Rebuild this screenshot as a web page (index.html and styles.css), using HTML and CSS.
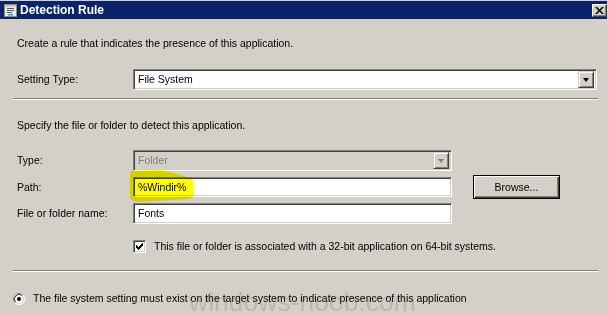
FILE: index.html
```html
<!DOCTYPE html>
<html>
<head>
<meta charset="utf-8">
<link rel="stylesheet" href="styles.css">
</head>
<body>
<div class="window">
  <div class="titlebar">
    <svg class="app-icon" width="13" height="13" viewBox="0 0 13 13">
      <rect x="0.5" y="0.5" width="12" height="12" fill="#ecebe8" stroke="#8a8a8a"/>
      <rect x="1" y="1" width="11" height="2" fill="#c8c8c8"/>
      <path d="M3 4.5h7M3 6.5h7M3 8.5h5" stroke="#5a5a5a" stroke-width="1"/>
      <rect x="4" y="10" width="5" height="1.5" fill="#1aa0e8"/>
    </svg>
    <span class="title">Detection Rule</span>
    <div class="close-btn">
      <svg width="9" height="7" viewBox="0 0 9 7">
        <path d="M0 0h2l2.5 2.5L7 0h2L5.5 3.5 9 7H7L4.5 4.5 2 7H0l3.5-3.5z" fill="#000"/>
      </svg>
    </div>
  </div>

  <div class="content">
    <p class="text intro">Create a rule that indicates the presence of this application.</p>

    <div class="setting-row">
      <span class="text label">Setting Type:</span>
      <div class="combo combo-wide">
        <span class="combo-value">File System</span>
        <span class="drop-btn"><span class="arrow"></span></span>
      </div>
    </div>

    <div class="sep"></div>

    <p class="text intro second">Specify the file or folder to detect this application.</p>

    <div class="form-grid">
      <span class="text label">Type:</span>
      <div class="combo combo-disabled">
        <span class="combo-value">Folder</span>
        <span class="drop-btn"><span class="arrow arrow-disabled"></span></span>
      </div>
      <span></span>

      <span class="text label">Path:</span>
      <div class="field field-path"><span class="field-value">%Windir%</span></div>
      <div class="button default-btn"><span>Browse...</span></div>

      <span class="text label">File or folder name:</span>
      <div class="field"><span class="field-value">Fonts</span></div>
      <span></span>
    </div>

    <div class="check-row">
      <span class="checkbox">
        <svg width="7" height="7" viewBox="0 0 7 7"><path d="M0 2h1v1h1v1h1v-1h1v-1h1v-1h1v-1h1v3h-1v1h-1v1h-1v1h-1v1h-1v-1h-1v-1h-1z" fill="#000"/></svg>
      </span>
      <span class="text">This file or folder is associated with a 32-bit application on 64-bit systems.</span>
    </div>

    <div class="sep sep-second"></div>

    <div class="radio-row">
      <svg class="radio" width="12" height="12" viewBox="0 0 12 12">
        <circle cx="6" cy="6" r="5.5" fill="#fff" stroke="#ffffff"/>
        <path d="M2.11 9.89A5.5 5.5 0 0 1 9.89 2.11" fill="none" stroke="#808080"/>
        <circle cx="6" cy="6" r="4.5" fill="#fff" stroke="#d4d0c8"/>
        <path d="M2.82 9.18A4.5 4.5 0 0 1 9.18 2.82" fill="none" stroke="#404040"/>
        <circle cx="6" cy="6" r="2" fill="#000"/>
      </svg>
      <span class="text">The file system setting must exist on the target system to indicate presence of this application</span>
    </div>
  </div>

  <svg class="highlight" width="68" height="35" viewBox="0 0 68 35">
    <path d="M4 2L30 1C40 2 50 5 58 8C63 9 65 10 65 14L65 26C65 29 62 30 58 30L12 33C5 33 2 31 2 26L2 7C2 4 3 2 4 2Z" fill="#ffff00"/>
  </svg>

  <div class="watermark">windows-noob.com</div>
</div>
</body>
</html>
```

FILE: styles.css
```css
* { box-sizing: border-box; }

html, body {
  margin: 0;
  padding: 0;
  background: #d4d0c8;
}

.window {
  position: relative;
  width: 607px;
  height: 314px;
  overflow: hidden;
  background: #d4d0c8;
  font-family: "Liberation Sans", Arial, sans-serif;
  font-size: 10.5px;
  color: #000;
}

.titlebar {
  margin-top: 1px;
  height: 18px;
  background: #0a246a;
  display: flex;
  align-items: center;
  padding-left: 4px;
}

.app-icon { flex: none; }

.title {
  margin-left: 3px;
  color: #fff;
  font-weight: bold;
  font-size: 12px;
  line-height: 18px;
}

.close-btn {
  margin-left: auto;
  width: 15px;
  height: 13px;
  background: #d4d0c8;
  border: 1px solid;
  border-color: #fff #404040 #404040 #fff;
  box-shadow: inset -1px -1px #808080;
  display: flex;
  align-items: center;
  justify-content: center;
}

.content {
  padding: 18px 10px 0 13px;
}

.text {
  line-height: 13px;
  white-space: nowrap;
}

.intro {
  margin: 0;
  padding-left: 4px;
}

.intro.second { margin-top: 19px; }

.setting-row {
  margin-top: 19px;
  display: flex;
  align-items: center;
  padding-left: 4px;
}

.label {
  width: 116px;
  flex: none;
}

.combo {
  position: relative;
  height: 21px;
  background: #fff;
  border: 1px solid;
  border-color: #808080 #fff #fff #808080;
  box-shadow: inset 1px 1px #404040, inset -1px -1px #d4d0c8;
  display: flex;
  align-items: center;
  padding: 2px 2px 2px 4px;
}

.combo-wide { width: 465px; }

.combo-value { flex: 1; line-height: 13px; }

.drop-btn {
  flex: none;
  width: 16px;
  height: 17px;
  background: #d4d0c8;
  border: 1px solid;
  border-color: #d4d0c8 #404040 #404040 #d4d0c8;
  box-shadow: inset 1px 1px #fff, inset -1px -1px #808080;
  display: flex;
  align-items: center;
  justify-content: center;
}

.arrow {
  width: 0;
  height: 0;
  border-left: 3.5px solid transparent;
  border-right: 3.5px solid transparent;
  border-top: 4px solid #000;
  margin-top: 1px;
}

.arrow-disabled { border-top-color: #808080; }

.combo-disabled {
  background: #d4d0c8;
  color: #808080;
}

.sep {
  margin-top: 8px;
  width: 585px;
  height: 2px;
  border-top: 1px solid #808080;
  border-bottom: 1px solid #fff;
}

.sep-second { margin-top: 17px; }

.form-grid {
  margin-top: 18px;
  padding-left: 4px;
  display: grid;
  grid-template-columns: 116px 319px 108px;
  grid-template-rows: 21px 20px 21px;
  row-gap: 6px;
  align-items: center;
}

.form-grid .combo { height: 21px; }

.field {
  height: 100%;
  background: #fff;
  border: 1px solid;
  border-color: #808080 #fff #fff #808080;
  box-shadow: inset 1px 1px #404040, inset -1px -1px #d4d0c8;
  display: flex;
  align-items: center;
  padding-left: 4px;
}

.field-path { position: relative; }

.field-value { line-height: 13px; }

.button {
  height: 24px;
  background: #d4d0c8;
  display: flex;
  align-items: center;
  justify-content: center;
  line-height: 13px;
}

.default-btn {
  margin-left: 21px;
  border: 1px solid #000;
  box-shadow: inset 1px 1px #fff, inset -1px -1px #404040, inset -2px -2px #808080;
}

.check-row {
  margin-top: 16px;
  padding-left: 120px;
  display: flex;
  align-items: center;
  height: 13px;
}

.checkbox {
  flex: none;
  width: 13px;
  height: 13px;
  margin-right: 8px;
  background: #fff;
  border: 1px solid;
  border-color: #808080 #fff #fff #808080;
  box-shadow: inset 1px 1px #404040, inset -1px -1px #d4d0c8;
  display: flex;
  align-items: center;
  justify-content: center;
}

.radio-row {
  margin-top: 20px;
  display: flex;
  align-items: center;
  height: 13px;
}

.radio {
  flex: none;
  margin-right: 8px;
}

.highlight {
  position: absolute;
  left: 128px;
  top: 169px;
  mix-blend-mode: multiply;
}

.watermark {
  position: absolute;
  left: 189px;
  top: 287px;
  font-size: 26.5px;
  line-height: 30px;
  color: #bab7b1;
  mix-blend-mode: darken;
  white-space: nowrap;
}
```
